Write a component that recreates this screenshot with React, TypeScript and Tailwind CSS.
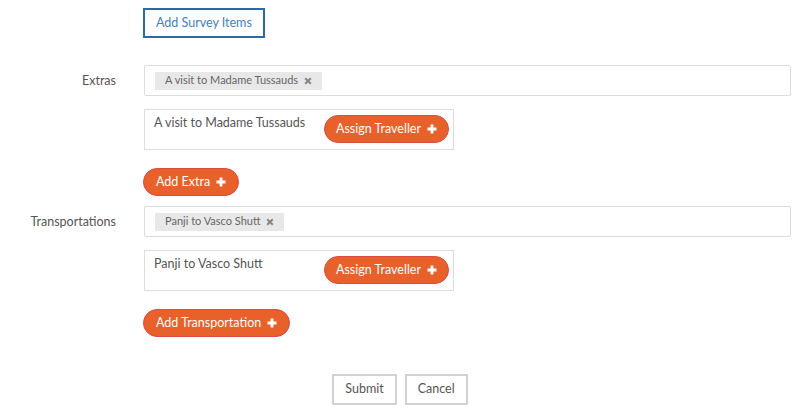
import React from "react";

function Plus() {
  return (
    <svg width="10" height="10" viewBox="0 0 10 10" className="ml-[6px] inline-block">
      <path d="M5 0.5v9M0.5 5h9" stroke="#fff" strokeWidth="2.8" strokeLinecap="butt" />
    </svg>
  );
}

function Times() {
  return (
    <svg width="8" height="8" viewBox="0 0 10 10" className="ml-[6px] inline-block">
      <path d="M1.5 1.5l7 7M8.5 1.5l-7 7" stroke="#888" strokeWidth="2.6" />
    </svg>
  );
}

function OrangeButton({ children, extra = "px-[11px]" }: { children: React.ReactNode; extra?: string }) {
  return (
    <button className={"flex h-[28px] items-center rounded-full border border-[#dc4a45] bg-[#e8612a] text-[12.5px] text-white " + extra}>
      {children}
      <Plus />
    </button>
  );
}

function Row({ label, tag, item, addLabel }: { label: string; tag: string; item: string; addLabel: string }) {
  return (
    <div className="flex">
      <div className="w-[116px] shrink-0 pt-[7px] text-right text-[12.5px] leading-[18px] text-[#555]">{label}</div>
      <div className="ml-[28px] mr-[9px] flex flex-1 flex-col">
        <div className="flex h-[31px] items-center rounded-[2px] border border-[#dcdcdc] pl-[10px]">
          <span className="flex h-[18px] items-center bg-[#e8e8e8] px-[10px] text-[11px] text-[#666]">
            {tag}
            <Times />
          </span>
        </div>
        <div className="mt-[13px] flex h-[41px] w-[310px] justify-between border border-[#dcdcdc] pl-[9px] pr-[4px] pt-[5px]">
          <span className="-mt-[1px] text-[12.5px] leading-[18px] text-[#555]">{item}</span>
          <OrangeButton>Assign Traveller</OrangeButton>
        </div>
        <div className="mt-[18px] flex">
          <OrangeButton extra="-ml-[1px] pl-[12px] pr-[12px]">{addLabel}</OrangeButton>
        </div>
      </div>
    </div>
  );
}

export default function App() {
  return (
    <div className="h-[414px] w-[800px] bg-white" style={{ fontFamily: "Lato, 'Open Sans', sans-serif" }}>
      <div className="pt-[8px] pl-[143px]">
        <button className="h-[30px] border-2 border-[#2c6aa0] px-[11px] text-[12.5px] text-[#3d80c8]">Add Survey Items</button>
      </div>
      <div className="mt-[27px]">
        <Row label="Extras" tag="A visit to Madame Tussauds" item="A visit to Madame Tussauds" addLabel="Add Extra" />
      </div>
      <div className="mt-[10px]">
        <Row label="Transportations" tag="Panji to Vasco Shutt" item="Panji to Vasco Shutt" addLabel="Add Transportation" />
      </div>
      <div className="mt-[37px] flex justify-center gap-[8px]">
        <button className="h-[31px] border-2 border-[#d2d2d2] px-[11px] text-[12.5px] text-[#555]">Submit</button>
        <button className="h-[31px] border-2 border-[#d2d2d2] px-[11px] text-[12.5px] text-[#555]">Cancel</button>
      </div>
    </div>
  );
}
